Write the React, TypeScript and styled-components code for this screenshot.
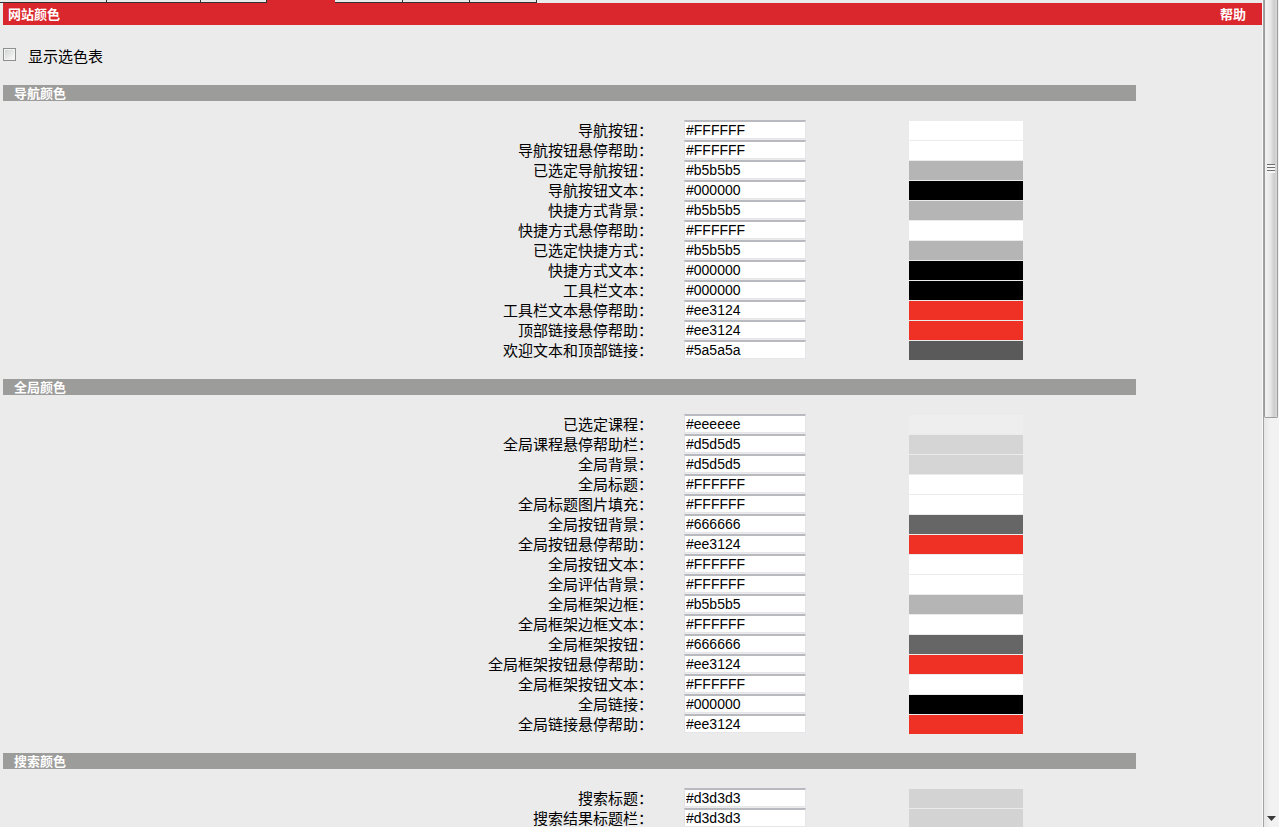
import React from "react";
import styled, { createGlobalStyle } from "styled-components";

const GlobalStyle = createGlobalStyle`
  html, body {
    margin: 0;
    padding: 0;
    background: #ebebeb;
    overflow: hidden;
  }
  body {
    font-family: "Liberation Sans", "Noto Sans CJK SC", sans-serif;
    color: #000;
  }
`;

type Entry = { label: string; value: string };
type Section = { title: string; rows: Entry[] };

const sections: Section[] = [
  {
    title: "导航颜色",
    rows: [
      { label: "导航按钮", value: "#FFFFFF" },
      { label: "导航按钮悬停帮助", value: "#FFFFFF" },
      { label: "已选定导航按钮", value: "#b5b5b5" },
      { label: "导航按钮文本", value: "#000000" },
      { label: "快捷方式背景", value: "#b5b5b5" },
      { label: "快捷方式悬停帮助", value: "#FFFFFF" },
      { label: "已选定快捷方式", value: "#b5b5b5" },
      { label: "快捷方式文本", value: "#000000" },
      { label: "工具栏文本", value: "#000000" },
      { label: "工具栏文本悬停帮助", value: "#ee3124" },
      { label: "顶部链接悬停帮助", value: "#ee3124" },
      { label: "欢迎文本和顶部链接", value: "#5a5a5a" },
    ],
  },
  {
    title: "全局颜色",
    rows: [
      { label: "已选定课程", value: "#eeeeee" },
      { label: "全局课程悬停帮助栏", value: "#d5d5d5" },
      { label: "全局背景", value: "#d5d5d5" },
      { label: "全局标题", value: "#FFFFFF" },
      { label: "全局标题图片填充", value: "#FFFFFF" },
      { label: "全局按钮背景", value: "#666666" },
      { label: "全局按钮悬停帮助", value: "#ee3124" },
      { label: "全局按钮文本", value: "#FFFFFF" },
      { label: "全局评估背景", value: "#FFFFFF" },
      { label: "全局框架边框", value: "#b5b5b5" },
      { label: "全局框架边框文本", value: "#FFFFFF" },
      { label: "全局框架按钮", value: "#666666" },
      { label: "全局框架按钮悬停帮助", value: "#ee3124" },
      { label: "全局框架按钮文本", value: "#FFFFFF" },
      { label: "全局链接", value: "#000000" },
      { label: "全局链接悬停帮助", value: "#ee3124" },
    ],
  },
  {
    title: "搜索颜色",
    rows: [
      { label: "搜索标题", value: "#d3d3d3" },
      { label: "搜索结果标题栏", value: "#d3d3d3" },
    ],
  },
];

const tabWidths = [107, 94, 66, 68, 68, 67, 67];
const activeTab = 3;

const Frame = styled.div`
  display: flex;
  height: 827px;
  overflow: hidden;
`;

const Main = styled.div`
  flex: 1;
  min-width: 0;
  overflow: hidden;
`;

const TabStrip = styled.div`
  display: flex;
  height: 3px;
`;

const Tab = styled.div<{ $w: number; $active: boolean }>`
  box-sizing: border-box;
  width: ${(p) => p.$w}px;
  height: 3px;
  background: ${(p) => (p.$active ? "#d9272d" : "#ebebeb")};
  border-right: 1px solid ${(p) => (p.$active ? "#d9272d" : "#333")};
  border-bottom: 1px solid ${(p) => (p.$active ? "#d9272d" : "#333")};
`;

const TitleBar = styled.div`
  display: flex;
  justify-content: space-between;
  align-items: center;
  height: 22px;
  margin: 0 1px 0 3px;
  padding: 0 16px 0 5px;
  background: #d9272d;
  color: #fff;
  font-family: "Noto Sans CJK SC", sans-serif;
  font-weight: 700;
  font-size: 13px;
  line-height: 22px;
`;

const CheckRow = styled.label`
  display: flex;
  align-items: flex-start;
  gap: 12px;
  height: 20px;
  margin: 21px 0 19px 3px;
  font-family: "Noto Sans CJK SC", sans-serif;
  font-size: 15px;
  line-height: 20px;
`;

const Check = styled.input`
  appearance: none;
  box-sizing: border-box;
  margin: 2px 0 0 0;
  width: 13px;
  height: 13px;
  border: 1px solid #8e8f8f;
  background: linear-gradient(135deg, #cfd0d2 0%, #f4f4f4 80%, #fff 100%);
  box-shadow: inset 0 0 0 1px #f3f3f3;
`;

const SectionBlock = styled.section`
  display: flex;
  flex-direction: column;
`;

const SectionBar = styled.div`
  height: 16px;
  width: 1133px;
  margin-left: 3px;
  padding-left: 11px;
  box-sizing: border-box;
  background: #9c9c9a;
  color: #fff;
  font-family: "Noto Sans CJK SC", sans-serif;
  font-weight: 700;
  font-size: 13px;
  line-height: 16px;
`;

const Rows = styled.div`
  display: flex;
  flex-direction: column;
  padding: 19px 0;
`;

const Row = styled.div`
  display: grid;
  grid-template-columns: 653px 31px 122px 103px 114px;
  height: 20px;
  align-items: start;
`;

const Label = styled.div`
  text-align: right;
  font-family: "Noto Sans CJK SC", sans-serif;
  font-size: 15px;
  line-height: 19px;
  white-space: nowrap;
`;

const ValueInput = styled.input`
  grid-column: 3;
  box-sizing: border-box;
  width: 122px;
  height: 19px;
  margin: 0;
  padding: 0 0 0 1px;
  border: 1px solid #e6e6ea;
  border-top: 2px solid #b9b9c0;
  border-left-color: #e2e2e6;
  background: #fff;
  font-family: "Liberation Sans", Arial, sans-serif;
  font-size: 14px;
  color: #000;
  outline: none;
`;

const Swatch = styled.div<{ $color: string }>`
  grid-column: 5;
  height: 19px;
  margin-top: 1px;
  background: ${(p) => p.$color};
`;

const ScrollTrack = styled.div`
  position: relative;
  width: 16px;
  box-sizing: border-box;
  border-left: 1px solid #a3a3a3;
  box-shadow: -1px 0 0 #f8f8f8;
  background: linear-gradient(90deg, #e6e6e6 0%, #f2f2f2 40%, #f2f2f2 100%);
  display: flex;
  flex-direction: column;
`;

const Thumb = styled.div`
  box-sizing: border-box;
  height: 418px;
  margin-right: 1px;
  border: 1px solid #9b9b9b;
  border-top: none;
  border-radius: 0 0 2px 2px;
  background: linear-gradient(90deg, #f2f2f2 0%, #e8e8e8 45%, #cdcdcd 75%, #d8d8d8 100%);
  display: flex;
  align-items: center;
  justify-content: center;
`;

const Grip = styled.div`
  width: 8px;
  height: 9px;
  background: repeating-linear-gradient(
    180deg,
    #6e6e6e 0px,
    #6e6e6e 1px,
    #f5f5f5 1px,
    #f5f5f5 3px
  );
  margin-top: -80px;
`;

const ArrowBox = styled.div`
  margin-top: auto;
  height: 16px;
  display: flex;
  align-items: center;
  justify-content: center;
`;

export default function App() {
  return (
    <>
      <GlobalStyle />
      <Frame>
        <Main>
          <TabStrip>
            {tabWidths.map((w, i) => (
              <Tab key={i} $w={w} $active={i === activeTab} />
            ))}
          </TabStrip>
          <TitleBar>
            <span>网站颜色</span>
            <span>帮助</span>
          </TitleBar>
          <CheckRow>
            <Check type="checkbox" />
            <span>显示选色表</span>
          </CheckRow>
          {sections.map((s) => (
            <SectionBlock key={s.title}>
              <SectionBar>{s.title}</SectionBar>
              <Rows>
                {s.rows.map((r) => (
                  <Row key={r.label}>
                    <Label>{r.label}：</Label>
                    <ValueInput type="text" defaultValue={r.value} />
                    <Swatch $color={r.value} />
                  </Row>
                ))}
              </Rows>
            </SectionBlock>
          ))}
        </Main>
        <ScrollTrack>
          <Thumb>
            <Grip />
          </Thumb>
          <ArrowBox>
            <svg width="9" height="6" viewBox="0 0 9 6">
              <path d="M0 0 H9 L4.5 5 Z" fill="#3a3a3a" />
            </svg>
          </ArrowBox>
        </ScrollTrack>
      </Frame>
    </>
  );
}
